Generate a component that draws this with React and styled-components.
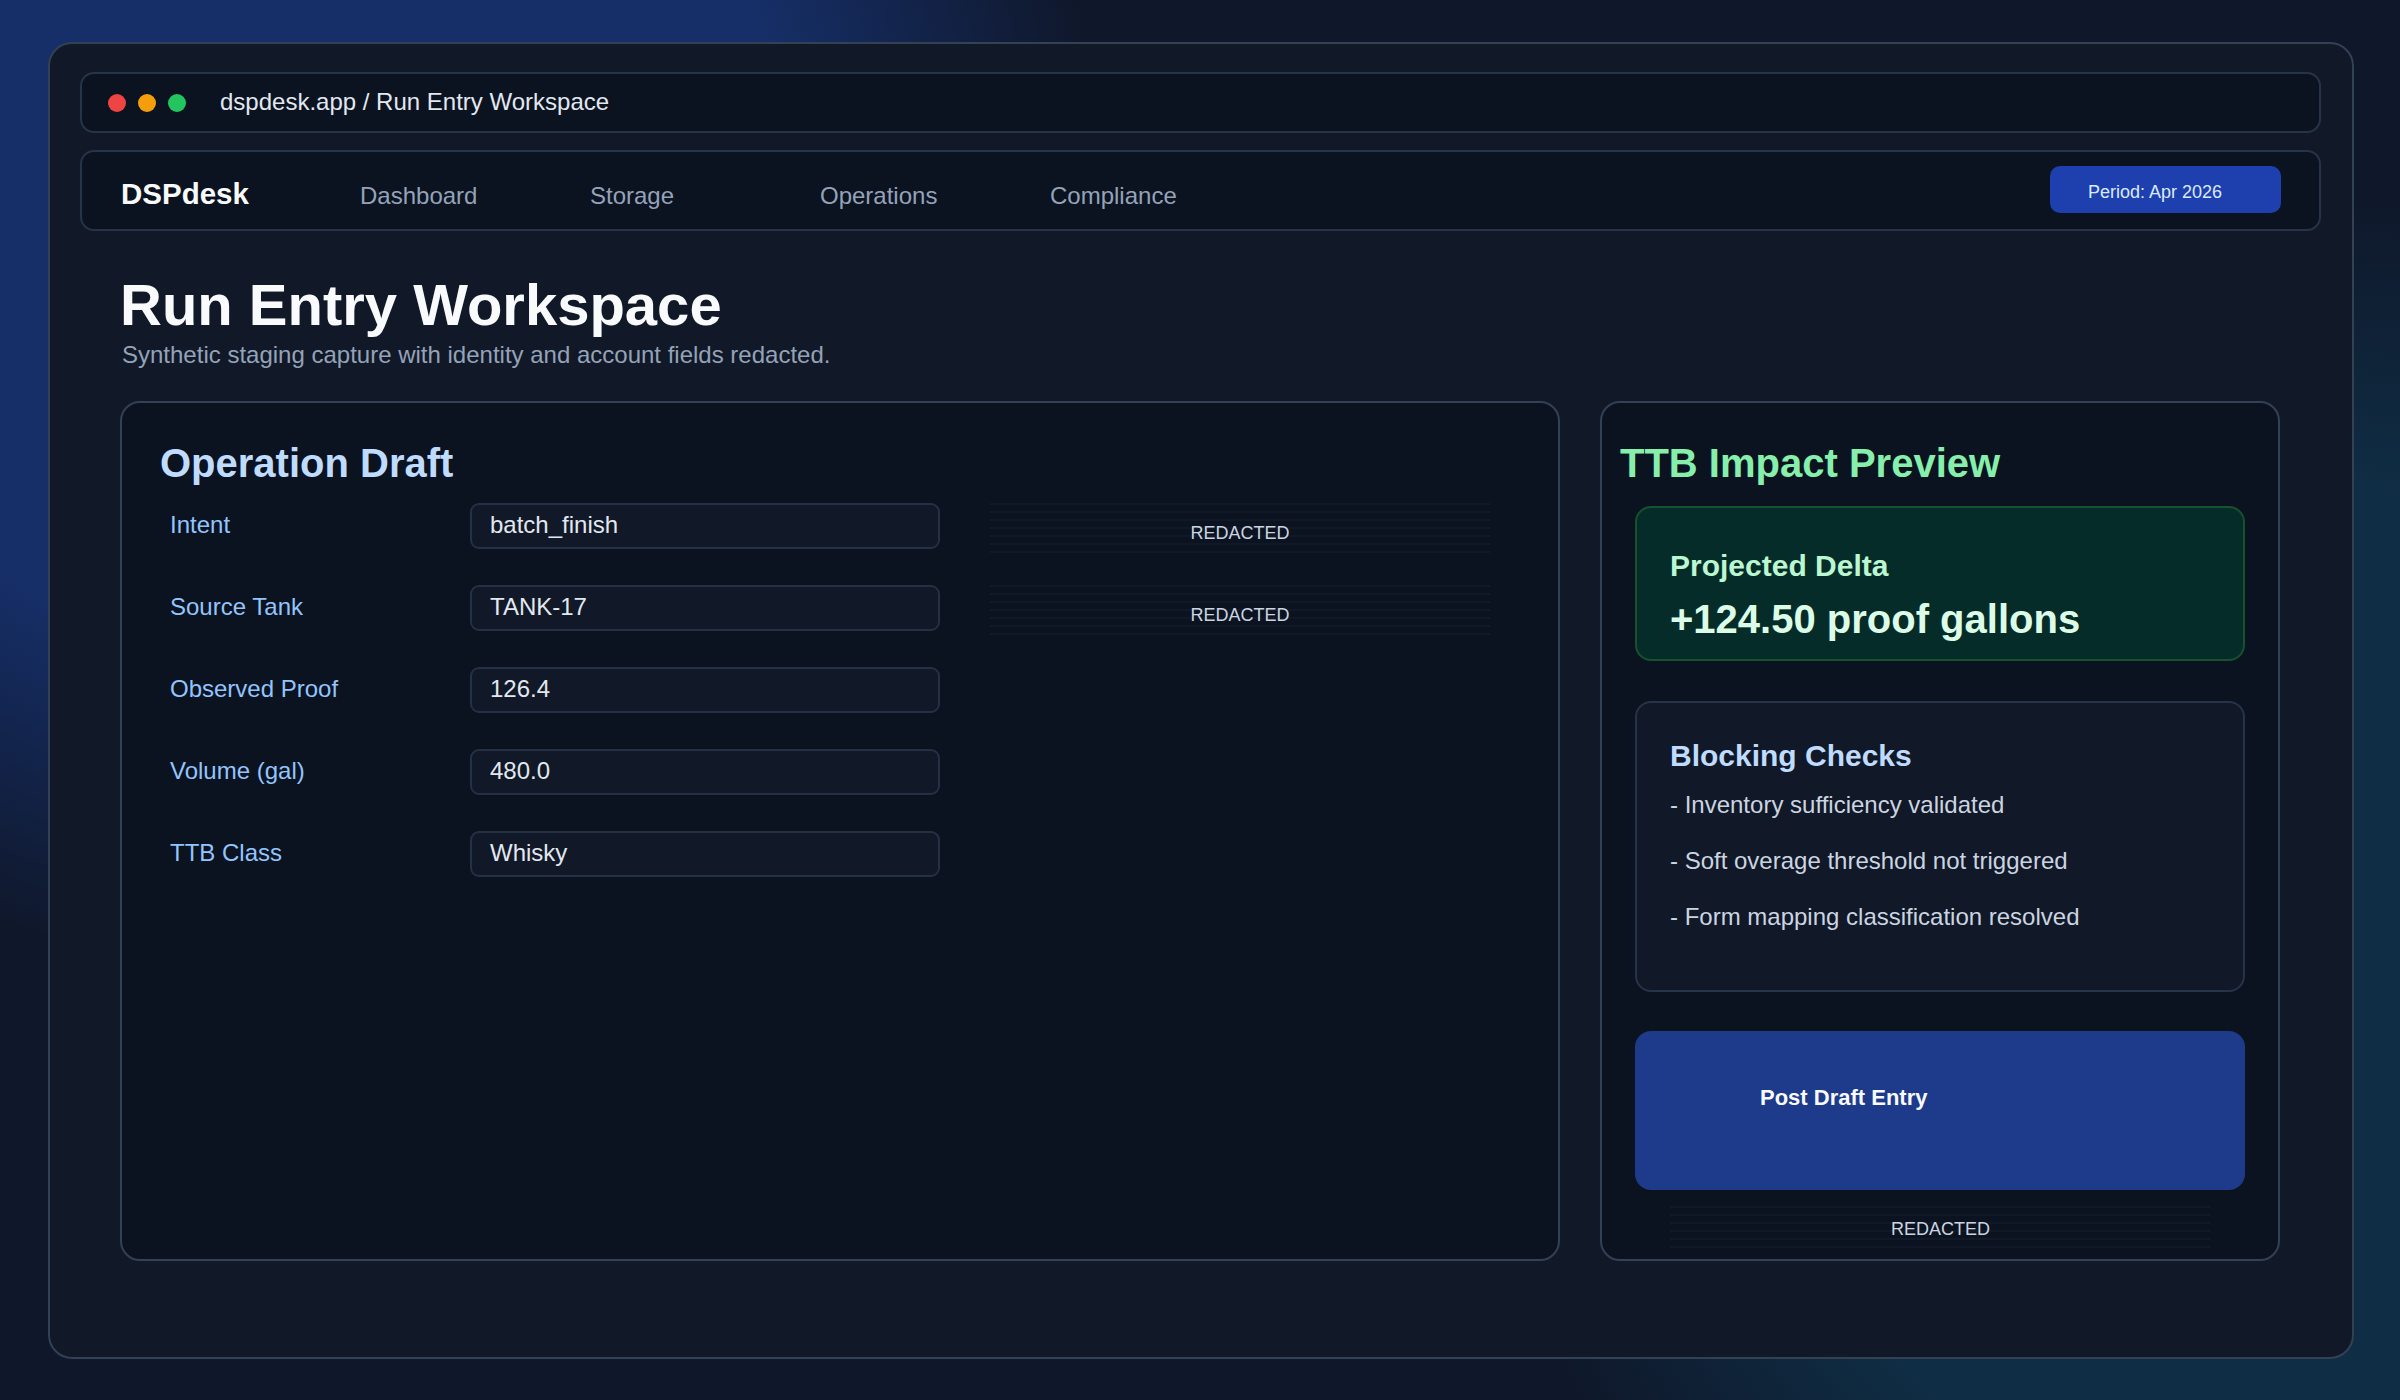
import React from 'react';
import styled, { createGlobalStyle } from 'styled-components';

const GlobalStyle = createGlobalStyle`
  html, body {
    margin: 0;
    padding: 0;
    background: #0f172a;
  }
  * {
    box-sizing: border-box;
  }
  body {
    font-family: "Liberation Sans", Arial, sans-serif;
  }
`;

const Page = styled.div`
  width: 2400px;
  height: 1400px;
  padding: 42px 0 0 48px;
  overflow: hidden;
  background:
    radial-gradient(circle at 288px 168px, #162f68 0, #162f68 490px, rgba(22, 47, 104, 0) 810px),
    radial-gradient(circle at 2280px 1000px, #0f2d44 0, #0f2d44 522px, rgba(15, 45, 68, 0) 815px),
    #0f172a;
`;

const Window = styled.div`
  width: 2306px;
  height: 1317px;
  padding: 28px 31px 28px 30px;
  background: #111827;
  border: 2px solid #334155;
  border-radius: 24px;
`;

const AddressBar = styled.div`
  height: 61px;
  display: flex;
  align-items: center;
  padding-left: 26px;
  background: #0b1220;
  border: 2px solid #263449;
  border-radius: 14px;
`;

const Dots = styled.div`
  display: flex;
  gap: 12px;
  margin-right: 34px;
`;

const Dot = styled.span`
  width: 18px;
  height: 18px;
  border-radius: 50%;
  background: ${(p) => p.$color};
`;

const Url = styled.div`
  margin-top: -2px;
  font-size: 24px;
  line-height: 28px;
  color: #e2e8f0;
`;

const NavBar = styled.div`
  height: 81px;
  margin-top: 17px;
  display: flex;
  padding: 14px 38px 0 39px;
  background: #0b1220;
  border: 2px solid #263449;
  border-radius: 14px;
`;

const Logo = styled.div`
  width: 239px;
  padding-top: 11px;
  font-size: 29.5px;
  line-height: 34px;
  font-weight: 700;
  color: #f8fafc;
`;

const NavLink = styled.div`
  width: 230px;
  padding-top: 13px;
  font-size: 24px;
  line-height: 34px;
  color: #94a3b8;
`;

const PeriodButton = styled.div`
  width: 231px;
  height: 47px;
  margin-left: auto;
  padding: 14px 0 0 38px;
  font-size: 18px;
  line-height: 24px;
  color: #dbeafe;
  background: #1e40af;
  border-radius: 10px;
`;

const Header = styled.div`
  margin: 44px 0 0 40px;
`;

const Title = styled.h1`
  margin: 0;
  font-size: 58px;
  line-height: 60px;
  font-weight: 700;
  color: #f8fafc;
`;

const Subtitle = styled.div`
  margin: 6px 0 0 2px;
  font-size: 24px;
  line-height: 28px;
  color: #94a3b8;
`;

const Columns = styled.div`
  display: grid;
  grid-template-columns: 1440px 680px;
  gap: 40px;
  margin: 32px 0 0 40px;
`;

const Panel = styled.section`
  height: 860px;
  padding-top: 36px;
  background: #0b1220;
  border: 2px solid #334155;
  border-radius: 20px;
`;

const PanelTitle = styled.h2`
  margin: 0 0 0 ${(p) => p.$indent}px;
  font-size: 40px;
  line-height: 48px;
  font-weight: 700;
  color: ${(p) => p.$color};
`;

const FieldGrid = styled.div`
  display: grid;
  grid-template-columns: 300px 470px 550px;
  grid-auto-rows: 50px;
  row-gap: 32px;
  margin: 16px 0 0 48px;
`;

const FieldLabel = styled.div`
  padding-top: 8px;
  font-size: 24px;
  line-height: 28px;
  color: #93c5fd;
`;

const FieldValue = styled.div`
  height: 46px;
  padding: 6px 18px;
  font-size: 24px;
  line-height: 28px;
  color: #e2e8f0;
  background: #111827;
  border: 2px solid #243145;
  border-radius: 9px;
`;

const Redacted = styled.div`
  height: ${(p) => p.$height}px;
  padding-top: ${(p) => p.$top}px;
  font-size: 18px;
  line-height: 22px;
  text-align: center;
  color: #cbd5e1;
  background: repeating-linear-gradient(to bottom, #111827 0, #111827 2px, transparent 2px, transparent 8px);
`;

const FieldRedacted = styled(Redacted)`
  margin-left: 50px;
`;

const SideBody = styled.div`
  display: flex;
  flex-direction: column;
  gap: 40px;
  margin: 19px 33px 0;
`;

const DeltaCard = styled.div`
  height: 155px;
  padding: 40px 0 0 33px;
  background: #062c2a;
  border: 2px solid #14532d;
  border-radius: 16px;
`;

const DeltaLabel = styled.div`
  font-size: 30px;
  line-height: 36px;
  font-weight: 700;
  color: #bbf7d0;
`;

const DeltaValue = styled.div`
  margin-top: 11px;
  font-size: 40px;
  line-height: 48px;
  font-weight: 700;
  color: #dcfce7;
`;

const ChecksCard = styled.div`
  height: 291px;
  margin-bottom: -1px;
  padding: 35px 0 0 33px;
  background: #111827;
  border: 2px solid #263449;
  border-radius: 16px;
`;

const ChecksTitle = styled.div`
  font-size: 30px;
  line-height: 36px;
  font-weight: 700;
  color: #bfdbfe;
`;

const CheckList = styled.div`
  display: flex;
  flex-direction: column;
  gap: 28px;
  margin-top: 17px;
`;

const CheckItem = styled.div`
  font-size: 24px;
  line-height: 28px;
  color: #cbd5e1;
`;

const PostButton = styled.div`
  height: 159px;
  padding: 54px 0 0 125px;
  font-size: 22px;
  line-height: 26px;
  font-weight: 700;
  color: #f8fafc;
  background: #1e3a8a;
  border-radius: 16px;
`;

const SideRedacted = styled(Redacted)`
  width: 541px;
  margin: 16px 0 0 35px;
`;

const fields = [
  ['Intent', 'batch_finish', true],
  ['Source Tank', 'TANK-17', true],
  ['Observed Proof', '126.4', false],
  ['Volume (gal)', '480.0', false],
  ['TTB Class', 'Whisky', false],
];

const checks = [
  '- Inventory sufficiency validated',
  '- Soft overage threshold not triggered',
  '- Form mapping classification resolved',
];

const App = () => (
  <Page>
    <GlobalStyle />
    <Window>
      <AddressBar>
        <Dots>
          <Dot $color="#ef4444" />
          <Dot $color="#f59e0b" />
          <Dot $color="#22c55e" />
        </Dots>
        <Url>dspdesk.app / Run Entry Workspace</Url>
      </AddressBar>
      <NavBar>
        <Logo>DSPdesk</Logo>
        <NavLink>Dashboard</NavLink>
        <NavLink>Storage</NavLink>
        <NavLink>Operations</NavLink>
        <NavLink>Compliance</NavLink>
        <PeriodButton>Period: Apr 2026</PeriodButton>
      </NavBar>
      <Header>
        <Title>Run Entry Workspace</Title>
        <Subtitle>Synthetic staging capture with identity and account fields redacted.</Subtitle>
      </Header>
      <Columns>
        <Panel>
          <PanelTitle $indent={38} $color="#bfdbfe">Operation Draft</PanelTitle>
          <FieldGrid>
            {fields.map(([label, value, redacted]) => (
              <React.Fragment key={label}>
                <FieldLabel>{label}</FieldLabel>
                <FieldValue>{value}</FieldValue>
                {redacted ? <FieldRedacted $height={50} $top={19}>REDACTED</FieldRedacted> : <span />}
              </React.Fragment>
            ))}
          </FieldGrid>
        </Panel>
        <Panel>
          <PanelTitle $indent={18} $color="#86efac">TTB Impact Preview</PanelTitle>
          <SideBody>
            <DeltaCard>
              <DeltaLabel>Projected Delta</DeltaLabel>
              <DeltaValue>+124.50 proof gallons</DeltaValue>
            </DeltaCard>
            <ChecksCard>
              <ChecksTitle>Blocking Checks</ChecksTitle>
              <CheckList>
                {checks.map((check) => (
                  <CheckItem key={check}>{check}</CheckItem>
                ))}
              </CheckList>
            </ChecksCard>
            <div>
              <PostButton>Post Draft Entry</PostButton>
              <SideRedacted $height={42} $top={12}>REDACTED</SideRedacted>
            </div>
          </SideBody>
        </Panel>
      </Columns>
    </Window>
  </Page>
);

export default App;
